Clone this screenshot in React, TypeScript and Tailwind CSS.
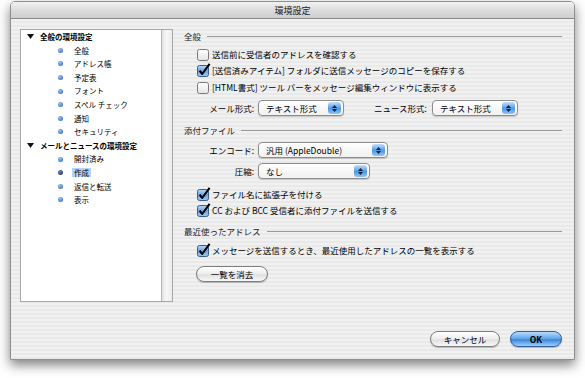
import React from "react";

type Group = { title: string; items: string[] };

const groups: Group[] = [
  {
    title: "全般の環境設定",
    items: ["全般", "アドレス帳", "予定表", "フォント", "スペル チェック", "通知", "セキュリティ"],
  },
  {
    title: "メールとニュースの環境設定",
    items: ["開封済み", "作成", "返信と転送", "表示"],
  },
];

const selected = "作成";

function Checkbox({ checked }: { checked?: boolean }) {
  return (
    <svg width="14" height="14" viewBox="0 0 14 14" className="shrink-0">
      <defs>
        <linearGradient id="cbOff" x1="0" y1="0" x2="0" y2="1">
          <stop offset="0" stopColor="#ffffff" />
          <stop offset="1" stopColor="#e4e4e4" />
        </linearGradient>
        <linearGradient id="cbOn" x1="0" y1="0" x2="0" y2="1">
          <stop offset="0" stopColor="#b9d8f8" />
          <stop offset="0.5" stopColor="#6aa6e8" />
          <stop offset="1" stopColor="#9cc8f4" />
        </linearGradient>
      </defs>
      <rect
        x="0.5"
        y="2.5"
        width="11"
        height="11"
        rx="2"
        fill={checked ? "url(#cbOn)" : "url(#cbOff)"}
        stroke={checked ? "#3b5f8c" : "#7a7a7a"}
      />
      {checked && (
        <path d="M2.6 7.6 L5.2 11 L12.6 0.8" stroke="#000" strokeWidth="2.1" fill="none" strokeLinejoin="round" />
      )}
    </svg>
  );
}

function Popup({ value, width }: { value: string; width: string }) {
  return (
    <div
      className={`${width} flex h-[16px] items-center justify-between rounded-[4px] border border-[#8c8c8c] bg-[linear-gradient(#ffffff,#f1f1f1)] pl-[7px] pr-[2px] shadow-[0_1px_1px_rgba(0,0,0,0.18)]`}
    >
      <span className="text-[8.5px] leading-none text-black">{value}</span>
      <span className="flex h-[12px] w-[13px] flex-col items-center justify-center gap-[1px] rounded-[3px] bg-[linear-gradient(#c5e0fa,#4f98e4_55%,#8fc3f3)]">
        <svg width="5" height="3" viewBox="0 0 5 3">
          <path d="M0 3 L2.5 0 L5 3 Z" fill="#102040" />
        </svg>
        <svg width="5" height="3" viewBox="0 0 5 3">
          <path d="M0 0 L2.5 3 L5 0 Z" fill="#102040" />
        </svg>
      </span>
    </div>
  );
}

function Heading({ text, mt }: { text: string; mt: string }) {
  return (
    <div className={`${mt} flex h-[14px] items-center`}>
      <span className="text-[8.5px] leading-none text-[#222]">{text}</span>
      <span className="ml-[6px] h-px flex-1 bg-[#9a9a9a]" />
    </div>
  );
}

function CheckRow({ label, checked, mt }: { label: string; checked?: boolean; mt: string }) {
  return (
    <div className={`${mt} flex h-[14px] items-center pl-[13px]`}>
      <Checkbox checked={checked} />
      <span className="ml-[1px] text-[8.5px] leading-none text-black">{label}</span>
    </div>
  );
}

function PillButton({ label, primary, width }: { label: string; primary?: boolean; width: string }) {
  return (
    <div
      className={`${width} flex h-[16px] items-center justify-center rounded-full border text-[8.5px] leading-none text-black shadow-[0_1px_1px_rgba(0,0,0,0.25)] ${
        primary
          ? "border-[#2f5d9c] bg-[linear-gradient(#b8dcfb,#5aa2ea_50%,#3a86dc_55%,#9ed0fa)] font-bold"
          : "border-[#7d7d7d] bg-[linear-gradient(#ffffff,#ececec_50%,#e0e0e0_55%,#f8f8f8)]"
      }`}
    >
      {label}
    </div>
  );
}

export default function App() {
  return (
    <div className="h-[378px] w-[585px] overflow-hidden bg-white pl-[10px] pt-[1px] font-['Noto_Sans_CJK_JP','Noto_Sans',sans-serif]">
      <div className="flex h-[359px] w-[565px] flex-col overflow-hidden rounded-t-[5px] border border-[#8f8f8f] shadow-[0_5px_12px_rgba(0,0,0,0.5)]">
        {/* title bar */}
        <div className="flex h-[17px] shrink-0 items-center justify-center border-b border-[#8a8a8a] bg-[linear-gradient(#f2f2f2,#dcdcdc_50%,#cfcfcf)]">
          <span className="text-[9px] leading-none text-[#1a1a1a]">環境設定</span>
        </div>

        <div className="flex flex-1 flex-col bg-[image:repeating-linear-gradient(180deg,#f1f1f1_0px,#f1f1f1_2px,#e9e9e9_2px,#e9e9e9_4px)] pl-[9px] pr-[12px] pt-[10px]">
          <div className="flex">
            {/* sidebar */}
            <div className="flex h-[273px] w-[153px] shrink-0 border border-[#a8a8a8] bg-white">
              <div className="flex-1">
                {groups.map((g) => (
                  <div key={g.title}>
                    <div className="flex h-[13.6px] items-center">
                      <svg width="7" height="5" viewBox="0 0 7 5" className="ml-[6px]">
                        <path d="M0 0 L7 0 L3.5 5 Z" fill="#111" />
                      </svg>
                      <span className="ml-[6px] text-[7.5px] font-bold leading-none text-black">{g.title}</span>
                    </div>
                    {g.items.map((it) => (
                      <div key={it} className="flex h-[13.6px] items-center">
                        <span
                          className={`ml-[37px] h-[5px] w-[5px] rounded-full ${
                            it === selected
                              ? "bg-[radial-gradient(circle_at_40%_35%,#6f7fa8,#1c2a55)]"
                              : "bg-[radial-gradient(circle_at_40%_35%,#9cc4f3,#1f5cc0)]"
                          }`}
                        />
                        <span
                          className={`ml-[9px] px-[2px] py-[1px] text-[7.5px] leading-none text-black ${
                            it === selected ? "bg-[#b7d2f7]" : ""
                          }`}
                        >
                          {it}
                        </span>
                      </div>
                    ))}
                  </div>
                ))}
              </div>
              <div className="w-[11px] border-l border-[#b5b5b5] bg-[linear-gradient(90deg,#e2e2e2,#f7f7f7_45%,#ececec)]" />
            </div>

            {/* content */}
            <div className="ml-[11px] flex flex-1 flex-col">
              <Heading text="全般" mt="mt-0" />
              <CheckRow mt="mt-[4px]" label="送信前に受信者のアドレスを確認する" />
              <CheckRow mt="mt-[2px]" checked label="[送信済みアイテム] フォルダに送信メッセージのコピーを保存する" />
              <CheckRow mt="mt-[3px]" label="[HTML書式] ツール バーをメッセージ編集ウィンドウに表示する" />
              <div className="mt-[6px] flex items-center">
                <span className="w-[70px] text-right text-[8.5px] leading-none text-black">メール形式:</span>
                <div className="ml-[4px]">
                  <Popup value="テキスト形式" width="w-[86px]" />
                </div>
                <span className="ml-[27px] w-[56px] text-right text-[8.5px] leading-none text-black">ニュース形式:</span>
                <div className="ml-[5px]">
                  <Popup value="テキスト形式" width="w-[86px]" />
                </div>
              </div>

              <Heading text="添付ファイル" mt="mt-[7px]" />
              <div className="mt-[5px] flex items-center">
                <span className="w-[70px] text-right text-[8.5px] leading-none text-black">エンコード:</span>
                <div className="ml-[4px]">
                  <Popup value="汎用 (AppleDouble)" width="w-[130px]" />
                </div>
              </div>
              <div className="mt-[5px] flex items-center">
                <span className="w-[70px] text-right text-[8.5px] leading-none text-black">圧縮:</span>
                <div className="ml-[4px]">
                  <Popup value="なし" width="w-[112px]" />
                </div>
              </div>
              <CheckRow mt="mt-[8px]" checked label="ファイル名に拡張子を付ける" />
              <CheckRow mt="mt-[2px]" checked label="CC および BCC 受信者に添付ファイルを送信する" />

              <Heading text="最近使ったアドレス" mt="mt-[7px]" />
              <CheckRow mt="mt-[5px]" checked label="メッセージを送信するとき、最近使用したアドレスの一覧を表示する" />
              <div className="mt-[9px] pl-[12px]">
                <PillButton label="一覧を消去" width="w-[72px]" />
              </div>
            </div>
          </div>

          {/* dialog buttons */}
          <div className="mt-[29px] flex justify-end gap-[10px]">
            <PillButton label="キャンセル" width="w-[70px]" />
            <PillButton label="OK" primary width="w-[52px]" />
          </div>
        </div>
      </div>
    </div>
  );
}
